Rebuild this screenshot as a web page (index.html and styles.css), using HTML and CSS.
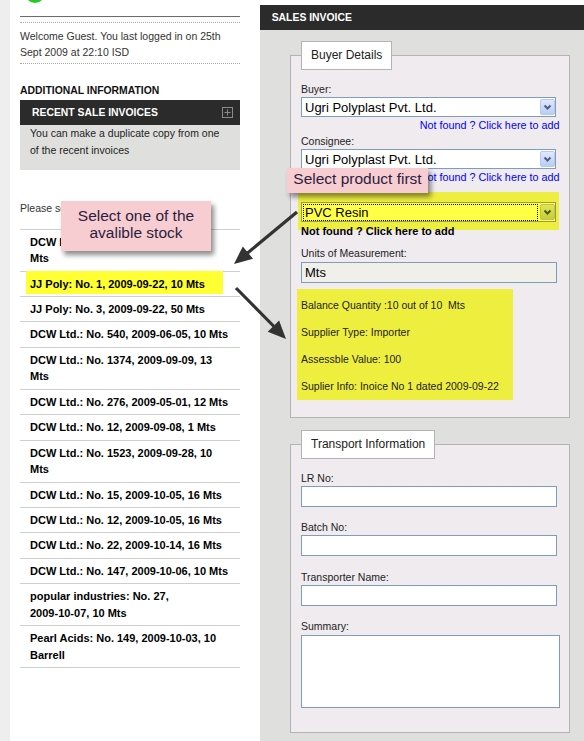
FILE: index.html
```html
<!DOCTYPE html>
<html lang="en">
<head>
<meta charset="utf-8">
<title>Sales Invoice</title>
<link rel="stylesheet" href="styles.css">
</head>
<body>
<div class="page">
  <div class="strip"></div>
  <aside class="sidebar">
    <div class="logo"><div class="logo-dot"></div></div>
    <div class="rule"></div>
    <p class="welcome">Welcome Guest. You last logged in on 25th Sept 2009 at 22:10 ISD</p>
    <h3 class="side-title">ADDITIONAL INFORMATION</h3>
    <div class="box-head">
      <span>RECENT SALE INVOICES</span>
      <svg class="plus" width="11" height="11" viewBox="0 0 11 11"><rect x="0.5" y="0.5" width="10" height="10" fill="none" stroke="#8a8a8a"/><path d="M5.5 2.5V8.5M2.5 5.5H8.5" stroke="#8a8a8a"/></svg>
    </div>
    <div class="box-body">You can make a duplicate copy from one of the recent invoices</div>
    <p class="please">Please select stock:</p>
    <ul class="stock">
      <li>DCW Ltd.: No. 12, 2009-09-22, 10<br>Mts</li>
      <li class="picked"><span class="pick-mark">JJ Poly: No. 1, 2009-09-22, 10 Mts</span></li>
      <li>JJ Poly: No. 3, 2009-09-22, 50 Mts</li>
      <li>DCW Ltd.: No. 540, 2009-06-05, 10 Mts</li>
      <li>DCW Ltd.: No. 1374, 2009-09-09, 13 Mts</li>
      <li>DCW Ltd.: No. 276, 2009-05-01, 12 Mts</li>
      <li>DCW Ltd.: No. 12, 2009-09-08, 1 Mts</li>
      <li>DCW Ltd.: No. 1523, 2009-09-28, 10 Mts</li>
      <li>DCW Ltd.: No. 15, 2009-10-05, 16 Mts</li>
      <li>DCW Ltd.: No. 12, 2009-10-05, 16 Mts</li>
      <li>DCW Ltd.: No. 22, 2009-10-14, 16 Mts</li>
      <li>DCW Ltd.: No. 147, 2009-10-06, 10 Mts</li>
      <li>popular industries: No. 27,<br>2009-10-07, 10 Mts</li>
      <li>Pearl Acids: No. 149, 2009-10-03, 10 Barrell</li>
    </ul>
  </aside>
  <main class="main">
    <div class="main-head">SALES INVOICE</div>
    <fieldset class="group">
      <legend class="group-title">Buyer Details</legend>
      <label class="f-label first">Buyer:</label>
      <div class="select">
        <span class="select-text">Ugri Polyplast Pvt. Ltd.</span>
        <span class="select-btn"><svg width="13" height="14" viewBox="0 0 13 14"><path d="M3.5 5.5L6.5 8.5L9.5 5.5" fill="none" stroke="#4d6185" stroke-width="2"/></svg></span>
      </div>
      <a class="add-link" href="#">Not found ? Click here to add</a>
      <label class="f-label">Consignee:</label>
      <div class="select">
        <span class="select-text">Ugri Polyplast Pvt. Ltd.</span>
        <span class="select-btn"><svg width="13" height="14" viewBox="0 0 13 14"><path d="M3.5 5.5L6.5 8.5L9.5 5.5" fill="none" stroke="#4d6185" stroke-width="2"/></svg></span>
      </div>
      <a class="add-link" href="#">Not found ? Click here to add</a>
      <label class="f-label">Product Description:</label>
      <div class="product-mark">
        <div class="select focus">
          <span class="select-text">PVC Resin</span>
          <span class="select-btn"><svg width="13" height="14" viewBox="0 0 13 14"><path d="M3.5 5.5L6.5 8.5L9.5 5.5" fill="none" stroke="#4c5a1c" stroke-width="2"/></svg></span>
        </div>
        <a class="add-link strong" href="#">Not found ? Click here to add</a>
      </div>
      <label class="f-label units">Units of Measurement:</label>
      <input class="text-input readonly" type="text" value="Mts" readonly>
      <div class="info">
        <p>Balance Quantity :10 out of 10&nbsp; Mts</p>
        <p>Supplier Type: Importer</p>
        <p>Assessble Value: 100</p>
        <p>Suplier Info: Inoice No 1 dated 2009-09-22</p>
      </div>
    </fieldset>
    <fieldset class="group transport">
      <legend class="group-title">Transport Information</legend>
      <label class="f-label first">LR No:</label>
      <input class="text-input" type="text">
      <label class="f-label t">Batch No:</label>
      <input class="text-input" type="text">
      <label class="f-label t">Transporter Name:</label>
      <input class="text-input" type="text">
      <label class="f-label t">Summary:</label>
      <textarea class="text-area"></textarea>
    </fieldset>
  </main>
</div>

<svg class="arrows" width="584" height="741" viewBox="0 0 584 741">
  <line x1="297" y1="212" x2="247" y2="253.5" stroke="#333" stroke-width="3.2"/>
  <polygon points="234,264 253,258.8 242.8,246.4" fill="#333"/>
  <line x1="236" y1="288" x2="274" y2="326.5" stroke="#333" stroke-width="3.2"/>
  <polygon points="286,339 267.7,331.7 279.1,320.5" fill="#333"/>
</svg>
<div class="callout callout-stock">Select one of the<br>avalible stock</div>
<div class="callout callout-product">Select product first</div>
</body>
</html>
```
FILE: styles.css
```css
* { box-sizing: border-box; }

body {
  margin: 0;
  font-family: "Liberation Sans", Arial, sans-serif;
  color: #222;
  background: #fff;
}

.page {
  display: flex;
  min-height: 741px;
}

.strip {
  width: 10px;
  flex: none;
  background: #eeeeee;
}

.sidebar {
  width: 250px;
  flex: none;
  padding: 0 20px 0 10px;
}

.logo {
  height: 16px;
  overflow: hidden;
  padding-left: 5px;
}

.logo-dot {
  width: 20px;
  height: 20px;
  margin-top: -17px;
  border-radius: 50%;
  background: #1fcc1f;
}

.rule {
  height: 7px;
  border-top: 1px solid #6b6b6b;
  border-bottom: 1px dotted #a8a8a8;
}

.welcome {
  margin: 0;
  padding: 4.8px 0 3px;
  font-size: 10.5px;
  line-height: 16px;
  color: #333;
  border-bottom: 1px dotted #a8a8a8;
}

.side-title {
  margin: 19.8px 0 3.4px;
  font-size: 10.4px;
  line-height: 13px;
  font-weight: bold;
  color: #111;
}

.box-head {
  display: flex;
  justify-content: space-between;
  align-items: center;
  height: 25px;
  padding: 0 7px 0 12px;
  background: #2b2b2b;
  color: #fff;
  font-weight: bold;
  font-size: 10.4px;
}

.plus { display: block; }

.box-body {
  background: #dfe0de;
  padding: 0 10px 11.4px;
  font-size: 10.5px;
  line-height: 17px;
  color: #222;
}

.please {
  margin: 30px 0 12.3px;
  font-size: 10.5px;
  line-height: 16px;
  color: #333;
}

.stock {
  list-style: none;
  margin: 0;
  padding: 0;
  border-top: 1px solid #cfcfcf;
}

.stock li {
  padding: 4px 10px 3.8px;
  border-bottom: 1px solid #cfcfcf;
  font-weight: bold;
  font-size: 11px;
  line-height: 16.6px;
  color: #000;
}

.stock li.picked {
  padding: 0 17px 1.8px 6px;
}

.pick-mark {
  display: block;
  margin-top: -1px;
  padding: 5px 4px 2px;
  background: #ffff33;
}

.main {
  flex: 1;
  margin-top: 5px;
  background: #dfe0de;
}

.main-head {
  height: 25px;
  line-height: 25px;
  padding-left: 11.7px;
  background: #2b2b2b;
  color: #fff;
  font-weight: bold;
  font-size: 10.4px;
}

.group {
  margin: 11px 14px 0 30px;
  padding: 0 8px 17px 10px;
  border: 1px solid #b3b3b3;
  background: #efebef;
  min-width: 0;
}

.group.transport {
  margin-top: 12px;
  padding-bottom: 24px;
}

.group-title {
  padding: 0 9px;
  border: 1px solid #b3b3b3;
  background: #fff;
  font-size: 12px;
  line-height: 27px;
  color: #222;
}

.f-label {
  display: block;
  margin-top: 3px;
  font-size: 10.5px;
  line-height: 13px;
  color: #222;
}

.f-label.first { margin-top: 13px; }
.f-label.units { margin-top: 9px; }
.f-label.t { margin-top: 14.5px; }

.select {
  display: flex;
  align-items: center;
  width: 255px;
  height: 20px;
  margin-top: 1px;
  border: 1px solid #7f9db9;
  background: #fff;
}

.select-text {
  flex: 1;
  margin: 0 2px 0 1px;
  padding-left: 1px;
  border: 1px dotted transparent;
  font-size: 13px;
  line-height: 15px;
  color: #000;
  white-space: nowrap;
}

.select-btn {
  display: flex;
  align-items: center;
  justify-content: center;
  width: 15px;
  height: 16px;
  border: 1px solid #b7c9ef;
  border-radius: 2px;
  background: linear-gradient(#dfe9fd, #b9cdf4);
}

.select.focus {
  background: #ffff45;
  border-color: #9a9a58;
}

.select.focus .select-text {
  border-color: #000;
}

.select.focus .select-btn {
  border-color: #c0c444;
  background: linear-gradient(#e2e652, #c6cc3a);
}

.add-link {
  display: block;
  margin-top: 2px;
  padding-right: 1.5px;
  text-align: right;
  font-size: 10.8px;
  line-height: 13px;
  color: #0000ff;
  text-decoration: none;
}

.add-link.strong {
  margin-top: 3px;
  padding-right: 0;
  text-align: left;
  font-weight: bold;
  font-size: 11px;
  color: #000;
}

.product-mark {
  position: relative;
  z-index: 0;
  margin-top: 2px;
}

.product-mark::before {
  content: "";
  position: absolute;
  left: -3px;
  top: -10px;
  width: 261px;
  height: 38px;
  background: #eeee40;
  z-index: -1;
}

.text-input {
  display: block;
  width: 256px;
  height: 21px;
  margin: 1px 0 0;
  padding: 0 3px;
  border: 1px solid #7f9db9;
  background: #fff;
  font-family: "Liberation Sans", Arial, sans-serif;
  font-size: 13px;
  color: #000;
  outline: none;
}

.text-input.readonly {
  margin-top: 2px;
  background: #f0efe9;
}

.text-area {
  display: block;
  width: 259px;
  height: 73px;
  margin: 1.5px 0 0;
  padding: 2px;
  border: 1px solid #7f9db9;
  background: #fff;
  resize: none;
  outline: none;
  font-family: "Liberation Sans", Arial, sans-serif;
  font-size: 12px;
}

.info {
  width: 216px;
  margin: 6px 0 0 -4px;
  padding: 2.5px 0 0 4px;
  background: #eeee3e;
}

.info p {
  margin: 0;
  font-size: 10.5px;
  line-height: 27.1px;
  color: #222;
}

.arrows {
  position: absolute;
  left: 0;
  top: 0;
  z-index: 5;
  pointer-events: none;
}

.callout {
  position: absolute;
  z-index: 6;
  background: #f7cdd1;
  color: #2b1d40;
  font-size: 15.5px;
  text-align: center;
  box-shadow: 3px 4px 5px rgba(0, 0, 0, 0.45);
}

.callout-stock {
  left: 61px;
  top: 201px;
  width: 150px;
  height: 50px;
  padding-top: 6px;
  line-height: 17px;
}

.callout-product {
  left: 287px;
  top: 168px;
  width: 141px;
  height: 25px;
  line-height: 22px;
}
```
